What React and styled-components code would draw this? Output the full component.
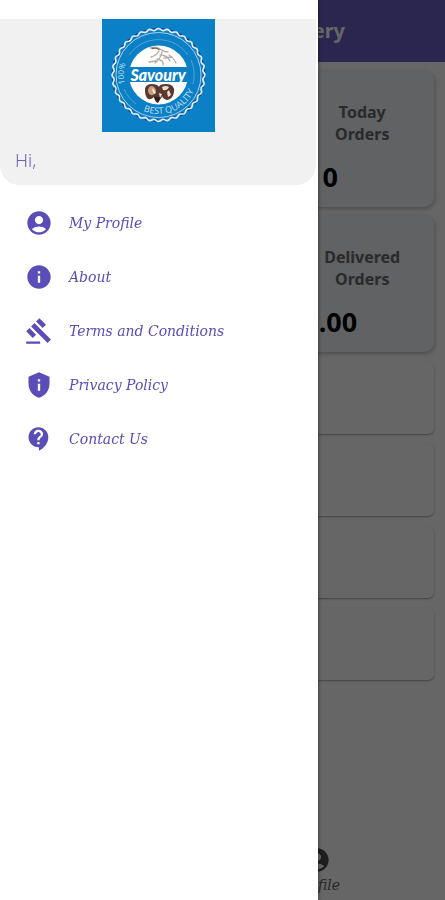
import styled, { createGlobalStyle } from "styled-components";
import { MdAccountCircle, MdContactSupport, MdGavel, MdInfo, MdListAlt, MdPrivacyTip } from "react-icons/md";

const GlobalStyle = createGlobalStyle`
  * {
    box-sizing: border-box;
  }
  body {
    margin: 0;
    background: #fff;
    font-family: "Noto Sans", sans-serif;
  }
`;
const Page = styled.div`
  display: flex;
  flex-direction: column;
  min-height: 100vh;
`;
const TopBar = styled.header`
  display: flex;
  align-items: center;
  justify-content: flex-end;
  height: 62px;
  padding-right: 100px;
  background: #6c60c6;
`;
const Title = styled.h1`
  margin: 0;
  color: #fff;
  font-size: 20px;
  line-height: 28px;
`;
const Content = styled.main`
  flex-grow: 1;
  padding: 8px 11px;
`;
const Stats = styled.section`
  display: grid;
  grid-template-columns: 1fr 1fr;
  gap: 8px;
  margin-bottom: 10px;
`;
const StatCard = styled.div`
  height: 137px;
  padding-top: 31px;
  background: #f0f4fa;
  border-radius: 10px;
  box-shadow: 1px 2px 4px rgba(0, 0, 0, 0.25);
`;
const StatHead = styled.div`
  display: flex;
  align-items: center;
  color: #6a5acd;
`;
const StatIcon = styled.span`
  display: flex;
  justify-content: center;
  width: 64px;
  font-size: 32px;
`;
const StatLabel = styled.h2`
  flex: 1;
  margin: 0;
  padding: 0 30px;
  color: #6a6a6a;
  font-size: 16px;
  line-height: 22px;
  text-align: center;
`;
const StatValue = styled.p`
  margin: 12px 0 0;
  color: #000;
  font-size: 27px;
  font-weight: 700;
  line-height: 40px;
  text-align: center;
`;
const List = styled.section`
  display: grid;
  gap: 10px;
`;
const ListCard = styled.div`
  height: 72px;
  background: #fff;
  border-radius: 6px;
  box-shadow: 0 1px 2px rgba(0, 0, 0, 0.35);
`;
const TabBar = styled.nav`
  display: flex;
  justify-content: flex-end;
  padding: 0 34px 4px;
`;
const Tab = styled.a`
  display: flex;
  flex-direction: column;
  align-items: center;
  width: 50%;
  color: #666;
  font-family: "DejaVu Serif", serif;
  font-size: 14px;
  font-style: italic;
  line-height: 22px;
  text-decoration: none;

  svg {
    width: 28px;
    height: 28px;
    color: #4c4c4c;
  }
`;
const Backdrop = styled.div`
  position: fixed;
  inset: 0;
  background: rgba(0, 0, 0, 0.6);
`;
const Drawer = styled.aside`
  position: fixed;
  top: 0;
  bottom: 0;
  left: 0;
  width: calc(100% - 127px);
  padding-top: 19px;
  background: #fff;
  box-shadow: 0 0 4px rgba(0, 0, 0, 0.6);
`;
const Profile = styled.div`
  height: 166px;
  margin-right: 2px;
  background: #f1f1f1;
  border-radius: 0 0 20px 20px;
`;
const Logo = styled.svg`
  display: block;
  width: 113px;
  height: 113px;
  margin: 0 auto;
`;
const Greeting = styled.p`
  margin: 16px 15px 0;
  color: #6f63b8;
  font-size: 18px;
  font-weight: 300;
  line-height: 24px;
`;
const Menu = styled.nav`
  display: flex;
  flex-direction: column;
  padding-top: 11px;
`;
const MenuLink = styled.a`
  display: flex;
  align-items: center;
  gap: 16px;
  height: 54px;
  padding: 0 25px;
  color: #5a4db8;
  font-family: "DejaVu Serif", serif;
  font-size: 14px;
  font-style: italic;
  text-decoration: none;

  svg {
    flex-shrink: 0;
    width: 28px;
    height: 28px;
  }
`;

const stats = [
  { id: "today", label: "Today Orders", value: "0" },
  { id: "delivered", label: "Delivered Orders", value: "0.00" },
];

const links = [
  { label: "My Profile", icon: MdAccountCircle },
  { label: "About", icon: MdInfo },
  { label: "Terms and Conditions", icon: MdGavel },
  { label: "Privacy Policy", icon: MdPrivacyTip },
  { label: "Contact Us", icon: MdContactSupport },
];

// wavy edge of the badge
const scallops = Array.from({ length: 193 }, (_, i) => {
  const a = (i / 192) * Math.PI * 2;
  const r = 45.5 + Math.cos(a * 32) * 1;
  return `${i ? "L" : "M"}${(56.5 + r * Math.cos(a)).toFixed(2)} ${(56 + r * Math.sin(a)).toFixed(2)}`;
}).join("");

function SavouryLogo() {
  return (
    <Logo viewBox="0 0 113 113" role="img" aria-label="Savoury">
      <defs>
        <path id="arc-bottom" d="M17.500 56a39 39 0 0 0 78 0" />
        <path id="arc-left" d="M36.500 84a34 34 0 0 1 0-56" />
        <clipPath id="disc">
          <circle cx="56.5" cy="56" r="29.5" />
        </clipPath>
      </defs>
      <rect width="113" height="113" fill="#0b80c6" />
      <circle
        cx="56.5"
        cy="56"
        r="45.5"
        fill="none"
        stroke="#1d3f92"
        strokeWidth="3"
        strokeDasharray="4 5"
      />
      <path d={scallops} fill="none" stroke="#e4f1f8" strokeWidth="1.6" />
      <circle cx="56.5" cy="56" r="42.5" fill="none" stroke="#a9d2ea" strokeWidth="1" />
      <path d="M27 36a36 36 0 0 1 59 0M89 41a36 36 0 0 1 2 24M22 70a36 36 0 0 0 12 15" fill="none" stroke="#4fa3d4" strokeWidth="1" />
      <g clipPath="url(#disc)">
        <rect x="26" y="25" width="61" height="23" fill="#fff" />
        <rect x="26" y="63" width="61" height="24" fill="#fff" />
      </g>
      <g fill="none" stroke="#b5aca0" strokeWidth="1.3" strokeLinecap="round">
        <path d="M48 29q6-2 10 1t8 3M57 32q-3 5-8 6M60 33q-1 6-7 11M58 36q7 0 10 6M55 40q7 1 6 6M67 36q5 3 7 8M47 43l7-1M62 39l8-1" />
        <path d="M50 29.500q5-1 7 1" stroke="#77624f" />
      </g>
      <g>
        <path d="M43 72q-1-6 6-7 7 0 8 3 0-3 7-3 9 0 8 8-1 7-7 8-4-1-5-4 0 3-4 3-4 0-4-2-4 4-7 1-2-3-2-7z" fill="#5a382d" />
        <path d="M46 72q0-5 4-5 4 1 4 6-2 4-5 3-3-1-3-4z" fill="#c99c7d" />
        <path d="M60 68q4-2 7 0-2 4-6 3zM67 71l2 5-3 2-1-5z" fill="#eadfd3" />
        <path d="M51 69l3 5-2 1-2-4zM57 74l3 1-2 4z" fill="#f3e9df" />
        <path d="M52 78q4-1 7 1l-3 5q-3-1-4-6z" fill="#35201e" />
      </g>
      <text
        x="56"
        y="62"
        fill="#fff"
        fontFamily="Liberation Sans Narrow, Lato, sans-serif"
        fontSize="16"
        fontStyle="italic"
        fontWeight="900"
        textAnchor="middle"
      >
        Savoury
      </text>
      <g fill="#b9dbee" fontFamily="Noto Sans, sans-serif">
        <text fontSize="9">
          <textPath href="#arc-bottom" startOffset="62%" textAnchor="middle">
            BEST QUALITY
          </textPath>
        </text>
        <text fontSize="8">
          <textPath href="#arc-left" startOffset="52%" textAnchor="middle">
            100%
          </textPath>
        </text>
      </g>
    </Logo>
  );
}

function App() {
  return (
    <>
      <GlobalStyle />
      <Page>
        <TopBar>
          <Title>Savoury Delivery</Title>
        </TopBar>
        <Content>
          <Stats>
            {stats.map(({ id, label, value }) => [
              <StatCard key={`${id}-empty`} />,
              <StatCard key={id}>
                <StatHead>
                  <StatIcon>
                    <MdListAlt />
                  </StatIcon>
                  <StatLabel>{label}</StatLabel>
                </StatHead>
                <StatValue>{value}</StatValue>
              </StatCard>,
            ])}
          </Stats>
          <List>
            <ListCard />
            <ListCard />
            <ListCard />
            <ListCard />
          </List>
        </Content>
        <TabBar>
          <Tab href="#profile">
            <MdAccountCircle />
            Profile
          </Tab>
        </TabBar>
      </Page>
      <Backdrop />
      <Drawer>
        <Profile>
          <SavouryLogo />
          <Greeting>Hi,</Greeting>
        </Profile>
        <Menu>
          {links.map(({ label, icon: Icon }) => (
            <MenuLink key={label} href="#">
              <Icon />
              {label}
            </MenuLink>
          ))}
        </Menu>
      </Drawer>
    </>
  );
}

export default App;
